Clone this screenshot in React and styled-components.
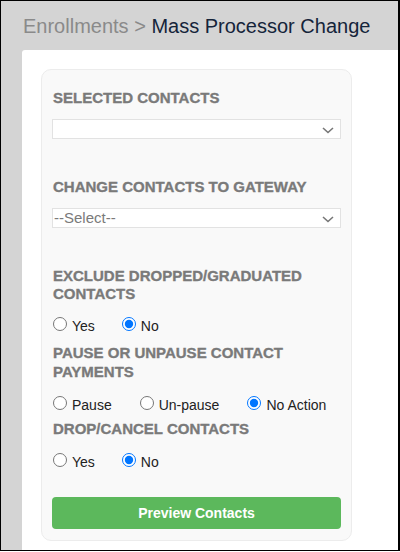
import styled, { createGlobalStyle } from 'styled-components'

const GlobalStyle = createGlobalStyle`
  html, body {
    margin: 0;
    padding: 0;
    background: #fff;
  }
  * {
    box-sizing: border-box;
  }
`

const Frame = styled.div`
  width: 400px;
  height: 551px;
  border: 1px solid #000;
  border-right-width: 2px;
  background: #d4d4d4;
  display: flex;
  flex-direction: column;
  overflow: hidden;
  font-family: "Liberation Sans", Arial, sans-serif;
`

const Title = styled.h1`
  margin: 0;
  height: 49px;
  padding: 13px 0 0 22px;
  font-size: 20px;
  font-weight: normal;
  line-height: 24px;
  color: #15243a;
  white-space: nowrap;

  & span {
    color: #8a8a8a;
  }
`

const Panel = styled.div`
  flex: 1;
  margin-left: 21px;
  background: #fff;
  border-top-left-radius: 3px;
  padding: 19px 0 0 19px;
`

const Card = styled.form`
  width: 311px;
  height: 472px;
  background: #f9f9f9;
  border: 1px solid #ececec;
  border-radius: 10px;
  padding: 19px 10px 0 10px;
  display: flex;
  flex-direction: column;
`

const Label = styled.div`
  margin: ${p => p.$top || 0}px 0 0 1px;
  font-size: 15px;
  line-height: 18.75px;
  font-weight: bold;
  color: #7a7a7a;
  -webkit-text-stroke: 0.35px #7a7a7a;
  text-transform: uppercase;
`

const SelectWrap = styled.div`
  position: relative;
  margin-top: 11px;
  height: 20px;
  background: #fff;
  border: 1px solid #e2e2e2;
`

const SelectText = styled.div`
  padding-left: 1px;
  font-size: 15px;
  line-height: 18px;
  color: #7a7a7a;
`

const Chevron = styled.svg`
  position: absolute;
  right: 6px;
  top: 7px;
`

const RadioRow = styled.div`
  margin-top: ${p => p.$top || 0}px;
  font-size: 14px;
  color: #222;
  white-space: nowrap;
`

const Option = styled.label`
  display: inline-block;
  margin-right: ${p => p.$gap || 26}px;

  & input {
    margin: 3px 5px 0 1px;
    width: 14px;
    height: 14px;
  }
`

const Button = styled.button`
  margin-top: 27px;
  height: 32px;
  border: none;
  border-radius: 4px;
  background: #5cb85c;
  color: #fff;
  font-family: inherit;
  font-size: 14px;
  font-weight: bold;
`

function Select({ value }) {
  return (
    <SelectWrap>
      <SelectText>{value}</SelectText>
      <Chevron width="12" height="7" viewBox="0 0 12 7">
        <path d="M1 1l5 4.5L11 1" fill="none" stroke="#777" strokeWidth="1.6" />
      </Chevron>
    </SelectWrap>
  )
}

function Radios({ name, options, checked, top, gaps = [] }) {
  return (
    <RadioRow $top={top}>
      {options.map((o, i) => (
        <Option key={o} $gap={gaps[i]}>
          <input type="radio" name={name} defaultChecked={o === checked} />
          {o}
        </Option>
      ))}
    </RadioRow>
  )
}

function App() {
  return (
    <>
      <GlobalStyle />
      <Frame>
        <Title><span>Enrollments &gt;</span> Mass Processor Change</Title>
        <Panel>
          <Card onSubmit={e => e.preventDefault()}>
            <Label>Selected Contacts</Label>
            <Select value="" />
            <Label $top={39}>Change Contacts to Gateway</Label>
            <Select value="--Select--" />
            <Label $top={39}>Exclude Dropped/Graduated Contacts</Label>
            <Radios name="exclude" options={['Yes', 'No']} checked="No" top={10} />
            <Label $top={10}>Pause or Unpause Contact Payments</Label>
            <Radios name="pause" options={['Pause', 'Un-pause', 'No Action']} checked="No Action" top={11} gaps={[27, 27]} />
            <Label $top={7}>Drop/Cancel Contacts</Label>
            <Radios name="drop" options={['Yes', 'No']} checked="No" top={12} />
            <Button type="submit">Preview Contacts</Button>
          </Card>
        </Panel>
      </Frame>
    </>
  )
}

export default App
